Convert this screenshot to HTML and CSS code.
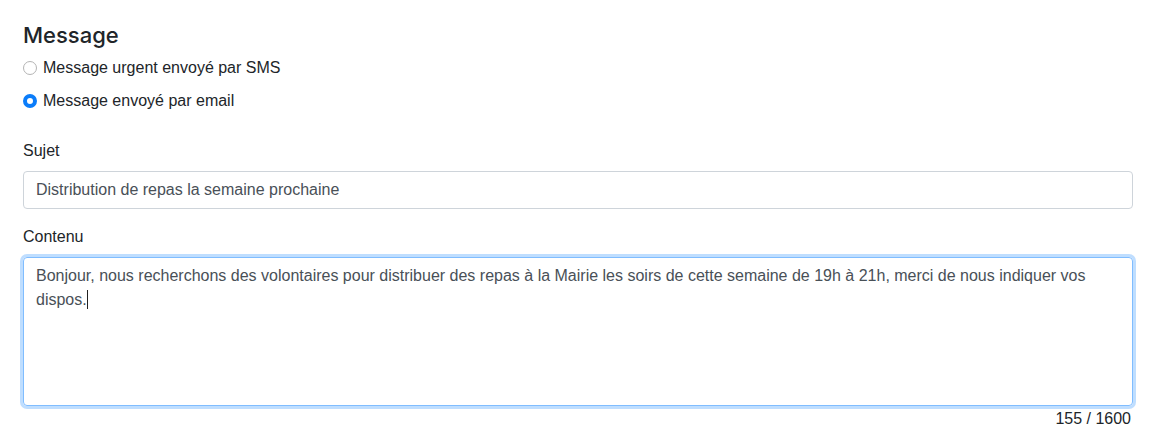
FILE: index.html
```html
<!DOCTYPE html>
<html lang="fr">
<head>
<meta charset="utf-8">
<title>Message</title>
<link rel="stylesheet" href="styles.css">
</head>
<body>
<div class="form">
  <h5 class="title">Message</h5>
  <div class="check">
    <span class="radio"></span>
    <span class="check-label">Message urgent envoyé par SMS</span>
  </div>
  <div class="check">
    <span class="radio radio-on"></span>
    <span class="check-label">Message envoyé par email</span>
  </div>
  <div class="group group-first">
    <div class="label">Sujet</div>
    <div class="input">Distribution de repas la semaine prochaine</div>
  </div>
  <div class="group">
    <div class="label">Contenu</div>
    <div class="textarea">Bonjour, nous recherchons des volontaires pour distribuer des repas à la Mairie les soirs de cette semaine de 19h à 21h, merci de nous indiquer vos dispos.<span class="caret"></span></div>
    <div class="counter">155 / 1600</div>
  </div>
</div>
</body>
</html>
```
FILE: styles.css
```css
html, body {
  margin: 0;
  padding: 0;
  background: #fff;
}
body {
  font-family: "Liberation Sans", Arial, sans-serif;
  font-size: 16px;
  line-height: 24px;
  color: #212529;
}
.form {
  padding: 23px 28px 0 23px;
}
.title {
  margin: 0 0 9px 0;
  font-family: Inter, "Liberation Sans", Arial, sans-serif;
  font-size: 22px;
  line-height: 24px;
  font-weight: 500;
  color: #212529;
}
.check {
  display: flex;
  align-items: center;
  height: 24px;
  margin-bottom: 9px;
}
.radio {
  box-sizing: border-box;
  width: 14px;
  height: 14px;
  border-radius: 50%;
  border: 1px solid #b4b4b4;
  background: #fff;
  margin-right: 6px;
  flex: none;
}
.radio-on {
  border: 4.5px solid #0b7dfa;
  background: #fff;
}
.check-label {
  font-size: 16px;
}
.group-first {
  margin-top: 26px;
}
.group {
  margin-bottom: 16px;
}
.label {
  margin-bottom: 8px;
}
.input {
  box-sizing: border-box;
  height: 38px;
  padding: 6px 12px;
  border: 1px solid #ced4da;
  border-radius: 4px;
  color: #495057;
}
.textarea {
  box-sizing: border-box;
  height: 149px;
  padding: 6px 12px;
  border: 1px solid #80bdff;
  border-radius: 4px;
  box-shadow: 0 0 0 3px rgba(0, 123, 255, 0.25);
  color: #495057;
}
.caret {
  display: inline-block;
  width: 1px;
  height: 19px;
  background: #222;
  vertical-align: -4px;
}
.counter {
  text-align: right;
  padding-right: 2px;
  margin-top: 1px;
}
```
